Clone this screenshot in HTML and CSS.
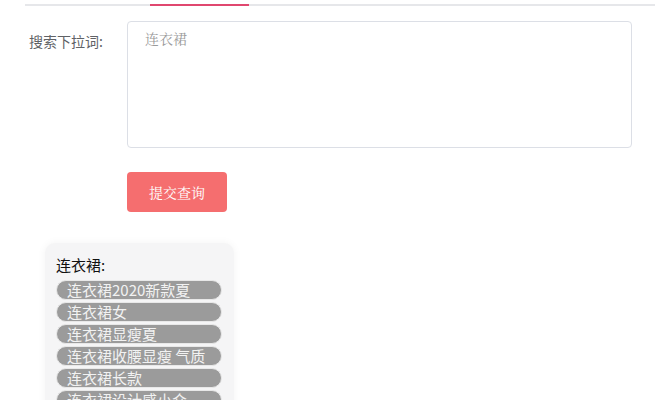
FILE: index.html
```html
<!DOCTYPE html>
<html lang="zh">
<head>
<meta charset="utf-8">
<title>搜索下拉词</title>
<link rel="stylesheet" href="styles.css">
</head>
<body>
<div class="page">
  <div class="tabs">
    <div class="tab-active"></div>
  </div>
  <div class="form-row">
    <label class="label">搜索下拉词:</label>
    <div class="textarea"><span class="placeholder">连衣裙</span></div>
  </div>
  <div class="btn-row">
    <button class="btn">提交查询</button>
  </div>
  <div class="result">
    <div class="result-title">连衣裙:</div>
    <div class="pill">连衣裙2020新款夏</div>
    <div class="pill">连衣裙女</div>
    <div class="pill">连衣裙显瘦夏</div>
    <div class="pill">连衣裙收腰显瘦 气质</div>
    <div class="pill">连衣裙长款</div>
    <div class="pill">连衣裙设计感小众</div>
  </div>
</div>
</body>
</html>
```
FILE: styles.css
```css
html, body {
  margin: 0;
  padding: 0;
  background: #fff;
  height: 400px;
  overflow: hidden;
}
body {
  font-family: "Noto Sans CJK SC", "Noto Sans", sans-serif;
}
.page {
  padding-left: 25px;
}
.tabs {
  margin-top: 4px;
  height: 2px;
  background: #e6e7ea;
}
.tab-active {
  margin-left: 125px;
  width: 99px;
  height: 2px;
  background: #e0476f;
}
.form-row {
  display: flex;
  margin-top: 15px;
}
.label {
  width: 98px;
  padding-left: 4px;
  padding-top: 10px;
  font-size: 14px;
  line-height: 20px;
  color: #606266;
}
.textarea {
  height: 125px;
  border: 1px solid #dcdfe6;
  border-radius: 4px;
  padding: 0 0 0 17px;
  width: 486px;
}
.placeholder {
  display: block;
  margin-top: 6px;
  font-size: 14px;
  line-height: 20px;
  color: #9a9a9a;
  font-family: "Noto Serif CJK SC", "Liberation Serif", serif;
}
.btn-row {
  margin-top: 24px;
  padding-left: 102px;
}
.btn {
  width: 100px;
  height: 40px;
  border: none;
  border-radius: 4px;
  background: #f56e6f;
  color: #fff;
  font-size: 14px;
  font-family: "Noto Serif CJK SC", "Liberation Serif", serif;
  padding: 0;
}
.result {
  margin-top: 31px;
  margin-left: 20px;
  width: 166px;
  padding: 12px 12px 20px 11px;
  background: #f5f5f6;
  border-radius: 10px;
  box-shadow: 0 0 8px rgba(0, 0, 0, 0.05);
}
.result-title {
  font-size: 15px;
  line-height: 20px;
  color: #111;
  margin-bottom: 5px;
}
.pill {
  height: 18px;
  line-height: 18px;
  border: 1px solid #e8e8e8;
  border-radius: 10px;
  background: #9b9b9b;
  color: #f2f2f2;
  font-size: 15px;
  padding-left: 10px;
  margin-bottom: 2px;
  white-space: nowrap;
  overflow: hidden;
}
```
